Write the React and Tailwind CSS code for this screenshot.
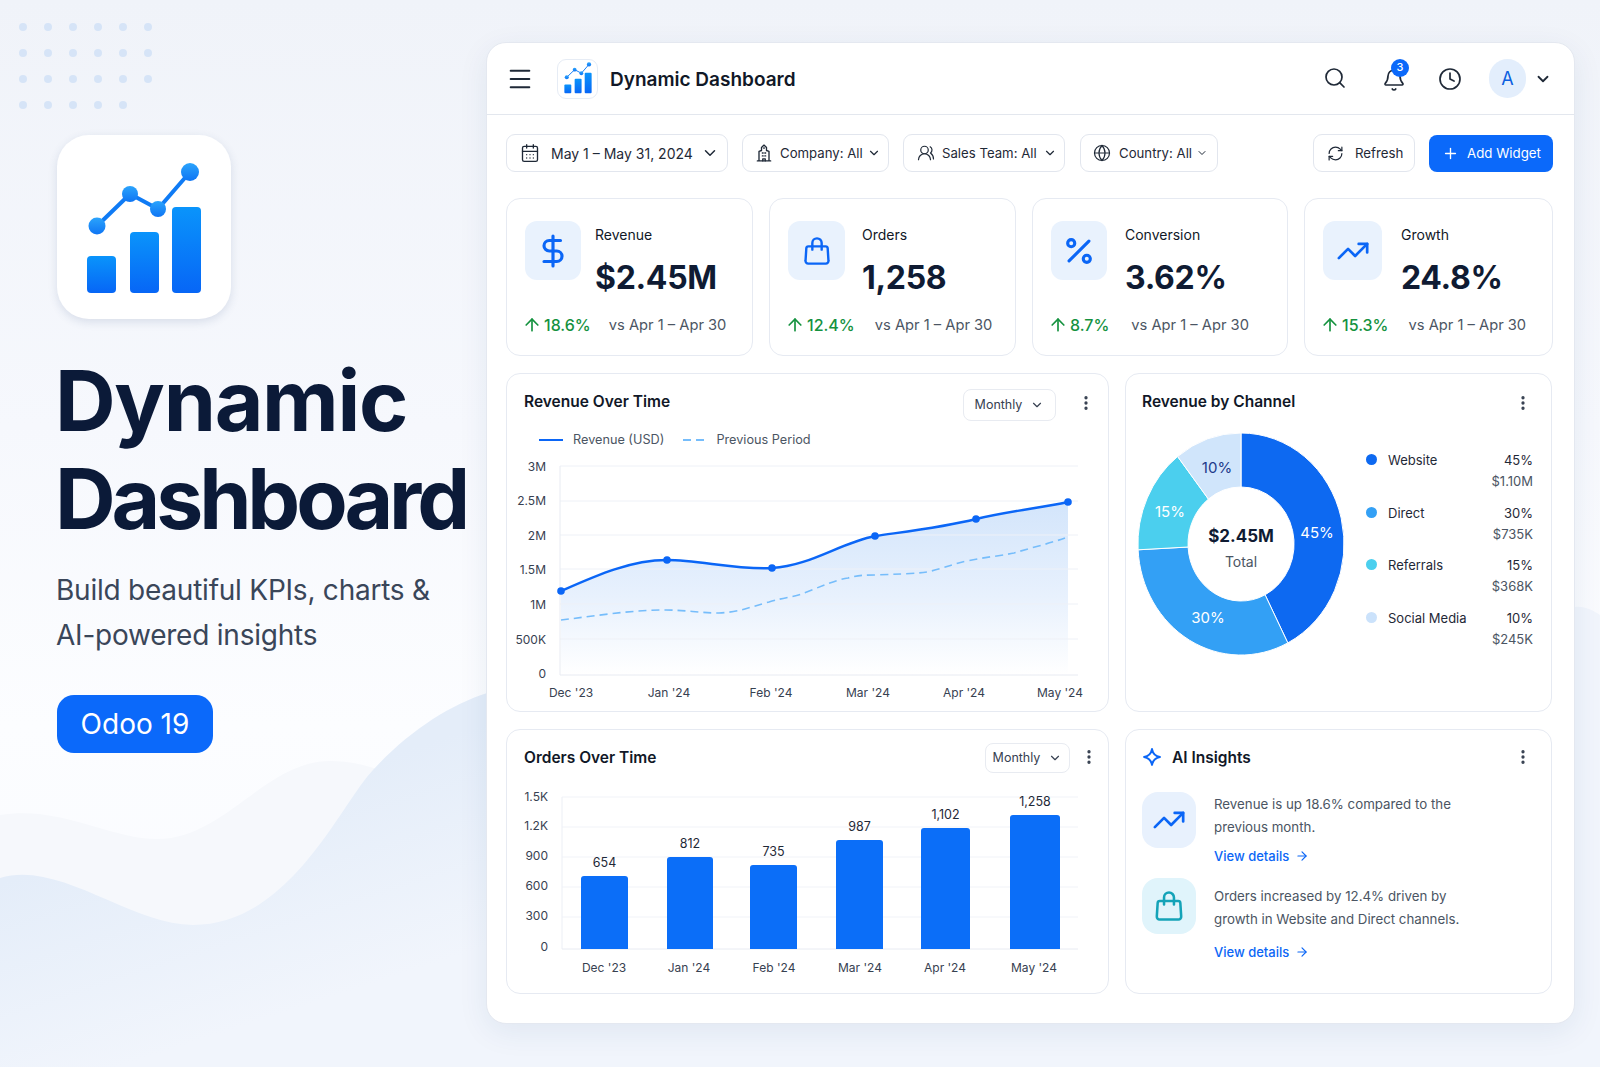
import { Menu, Search, Bell, Clock, ChevronDown, CalendarDays, UsersRound, Globe, RefreshCw, Plus, DollarSign, Percent, TrendingUp, ArrowUp, ArrowRight, EllipsisVertical } from 'lucide-react'

const BagIcon = ({ className }) => (
  <svg viewBox="0 0 24 24" fill="none" stroke="currentColor" strokeWidth="1.8" strokeLinejoin="round" strokeLinecap="round" className={className}>
    <path d="M5.5 8.5h13a1.5 1.5 0 0 1 1.5 1.4l.6 9.4a2 2 0 0 1-2 2.2H5.4a2 2 0 0 1-2-2.2l.6-9.4a1.5 1.5 0 0 1 1.5-1.4z" />
    <path d="M8.5 11V6a3.5 3.5 0 0 1 7 0v5" />
  </svg>
)

const TowerIcon = ({ className }) => (
  <svg viewBox="0 0 24 24" fill="none" stroke="currentColor" strokeWidth="1.6" strokeLinejoin="round" strokeLinecap="round" className={className}>
    <path d="M4 21.5h16M6 21.5V10l3-1V5.5l3-3 3 3V9l3 1v11.5" />
    <path d="M10 12h1M13 12h1M10 15.5h1M13 15.5h1M10.5 21.5V19h3v2.5M12 5.5v1" />
  </svg>
)

const LogoMark = ({ className, viewBox }) => (
  <svg viewBox={viewBox} className={className}>
    <defs>
      <linearGradient id="logoBar" x1="0" y1="0" x2="0" y2="1">
        <stop offset="0" stopColor="#0a94fb" />
        <stop offset="1" stopColor="#0766f6" />
      </linearGradient>
      <linearGradient id="logoDot" x1="0" y1="0" x2="0" y2="1">
        <stop offset="0" stopColor="#2ba4fc" />
        <stop offset="1" stopColor="#0f75f4" />
      </linearGradient>
    </defs>
    <rect x="87" y="256" width="29" height="37" rx="4" fill="url(#logoBar)" />
    <rect x="130" y="232" width="29" height="61" rx="4" fill="url(#logoBar)" />
    <rect x="172" y="207" width="29" height="86" rx="4" fill="url(#logoBar)" />
    <polyline points="97,226 130,194 158,209 190,172" fill="none" stroke="#0f7bf5" strokeWidth="4" />
    <circle cx="97" cy="226" r="8.5" fill="url(#logoDot)" />
    <circle cx="130" cy="194" r="8" fill="url(#logoDot)" />
    <circle cx="158" cy="209" r="8" fill="url(#logoDot)" />
    <circle cx="190" cy="172" r="9" fill="url(#logoDot)" />
  </svg>
)

const dotRows = [
  [23, 48, 73, 98, 123, 148],
  [23, 48, 73, 98, 123, 148],
  [23, 48, 73, 98, 123, 148],
  [23, 48, 73, 98, 123],
]

const Backdrop = () => (
  <svg viewBox="0 0 1600 1067" className="absolute inset-0 w-[1600px] h-[1067px]">
    <defs>
      <linearGradient id="pageBg" x1="0" y1="0" x2="0" y2="1">
        <stop offset="0" stopColor="#f0f3f9" />
        <stop offset="0.4" stopColor="#f6f8fd" />
        <stop offset="0.68" stopColor="#fcfdff" />
        <stop offset="1" stopColor="#f8faff" />
      </linearGradient>
      <linearGradient id="waveFront" gradientUnits="userSpaceOnUse" x1="0" y1="700" x2="120" y2="1067">
        <stop offset="0.45" stopColor="#e4edf9" />
        <stop offset="1" stopColor="#f1f5fc" />
      </linearGradient>
    </defs>
    <rect width="1600" height="1067" fill="url(#pageBg)" />
    <path d="M0 815C60 805 110 839 157 839C225 839 265 761 330 761C385 761 420 795 467 795C600 795 800 700 1000 700C1250 700 1450 640 1600 640V1067H0Z" fill="#f6f8fc" />
    <path d="M0 878C60 860 130 925 193 925C290 925 340 805 373 770C410 730 450 705 487 693C700 640 1400 640 1575 607C1585 606 1592 610 1600 615V1067H0Z" fill="url(#waveFront)" />
    {dotRows.map((row, i) =>
      row.map((x) => <circle key={`${i}-${x}`} cx={x} cy={[27, 53, 79, 105][i]} r="4" fill="#d6e4f7" />)
    )}
  </svg>
)

const FilterButton = ({ icon, label, box, chevron, labelTop = '' }) => (
  <button className={`flex items-center h-[38px] rounded-[9px] border border-[#e2e6ee] bg-white text-[#1f2937] ${box}`}>
    {icon}
    <span className={`whitespace-nowrap ${labelTop}`}>{label}</span>
    <ChevronDown className={`text-[#1f2937] ${chevron}`} strokeWidth={2} />
  </button>
)

const kpis = [
  { label: 'Revenue', value: '$2.45M', delta: '18.6%', tile: 'w-[56px]', gap: 'gap-[14px]', vsGap: 'ml-[18px]', icon: <DollarSign className="w-[36px] h-[36px] text-[#0b66f6]" strokeWidth={2.1} /> },
  { label: 'Orders', value: '1,258', delta: '12.4%', tile: 'w-[57px]', gap: 'gap-[17px]', vsGap: 'ml-[20px]', icon: <BagIcon className="w-[32px] h-[32px] text-[#0b66f6]" /> },
  { label: 'Conversion', value: '3.62%', delta: '8.7%', tile: 'w-[56px]', gap: 'gap-[18px]', vsGap: 'ml-[22px]', icon: <Percent className="w-[34px] h-[34px] text-[#0b66f6]" strokeWidth={2.2} /> },
  { label: 'Growth', value: '24.8%', delta: '15.3%', tile: 'w-[59px]', gap: 'gap-[19px]', vsGap: 'ml-[20px]', icon: <TrendingUp className="w-[34px] h-[34px] text-[#0b66f6]" strokeWidth={1.9} /> },
]

const KpiCard = ({ kpi }) => (
  <div className="h-[158px] rounded-[14px] border border-[#e6eaf2] bg-white pl-[18px] pt-[22px]">
    <div className={`flex ${kpi.gap}`}>
      <div className={`h-[59px] rounded-[12px] bg-[#e9f2fd] flex items-center justify-center shrink-0 ${kpi.tile}`}>{kpi.icon}</div>
      <div className="mt-[2px]">
        <div className="text-[14px] leading-[24px] text-[#111827]">{kpi.label}</div>
        <div className="mt-[10px] text-[32px] leading-[42px] font-bold text-[#0f1b33] tracking-[-0.01em] whitespace-nowrap">{kpi.value}</div>
      </div>
    </div>
    <div className="flex items-center mt-[14px] h-[24px]">
      <ArrowUp className="w-[20px] h-[20px] text-[#15923f] ml-[-3px] mr-[2px]" strokeWidth={2} />
      <span className="text-[16px] font-medium text-[#15923f]">{kpi.delta}</span>
      <span className={`text-[14.7px] text-[#4b5563] whitespace-nowrap ${kpi.vsGap}`}>vs Apr 1 – Apr 30</span>
    </div>
  </div>
)

const MonthlySelect = ({ className }) => (
  <button className={`flex items-center justify-center gap-[8px] rounded-[8px] border border-[#e8ebf1] bg-white text-[12.5px] text-[#374151] ${className}`}>
    Monthly
    <ChevronDown className="w-[14px] h-[14px]" strokeWidth={2} />
  </button>
)

const Kebab = ({ className }) => <EllipsisVertical className={`w-[18px] h-[18px] text-[#374151] ${className}`} strokeWidth={2.4} />

const revenueLine = 'M561 591C595 576 630 560 667 560C700 560 735 570 772 568C810 566 840 543 875 536C910 531 945 527 976 519C1010 511 1040 508 1068 502'
const prevLine = 'M561 620C595 616 630 610 666 610C685 610 700 613 719 613C740 612 750 607 769 602C785 597 795 597 804 593C820 587 835 580 848 578C858 575 866 575 876 575C895 574 912 574 927 572C945 568 952 564 967 561C985 557 1000 556 1014 553C1030 548 1048 544 1065 538'
const revenueDots = [[561, 591], [667, 560], [772, 568], [875, 536], [976, 519], [1068, 502]]

const RevenueChart = () => (
  <svg viewBox="507 455 601 255" className="block w-[601px] h-[255px]">
    <defs>
      <linearGradient id="revFill" x1="0" y1="0" x2="0" y2="1">
        <stop offset="0" stopColor="#d3e5fb" />
        <stop offset="0.55" stopColor="#e8f1fd" />
        <stop offset="1" stopColor="#ffffff" />
      </linearGradient>
    </defs>
    <path d={`${revenueLine}V675H561Z`} fill="url(#revFill)" />
    {[466, 501, 535, 569, 604, 639].map((y) => (
      <line key={y} x1="560" x2="1078" y1={y} y2={y} stroke="#eef1f7" />
    ))}
    <line x1="560" x2="560" y1="466" y2="675" stroke="#e8ebf2" />
    <line x1="560" x2="1078" y1="675" y2="675" stroke="#e8ebf2" />
    <path d={prevLine} fill="none" stroke="#76bdfb" strokeWidth="1.6" strokeDasharray="8 5" />
    <path d={revenueLine} fill="none" stroke="#0b66f6" strokeWidth="2.4" />
    {revenueDots.map(([x, y]) => <circle key={x} cx={x} cy={y} r="3.8" fill="#0b66f6" />)}
    {[['3M', 466], ['2.5M', 500], ['2M', 535], ['1.5M', 569], ['1M', 604], ['500K', 639], ['0', 673]].map(([t, y]) => (
      <text key={t} x="546" y={y} textAnchor="end" dominantBaseline="central" className="fill-[#374151] text-[12px]">{t}</text>
    ))}
    {[["Dec '23", 571], ["Jan '24", 669], ["Feb '24", 771], ["Mar '24", 868], ["Apr '24", 964], ["May '24", 1060]].map(([t, x]) => (
      <text key={t} x={x} y="692" textAnchor="middle" dominantBaseline="central" className="fill-[#374151] text-[12px]">{t}</text>
    ))}
  </svg>
)

const orderBars = [
  { x: 581, w: 47, top: 876, value: '654', vy: 862, lx: 604, month: "Dec '23" },
  { x: 667, w: 46, top: 857, value: '812', vy: 843, lx: 689, month: "Jan '24" },
  { x: 750, w: 47, top: 865, value: '735', vy: 851, lx: 774, month: "Feb '24" },
  { x: 836, w: 47, top: 840, value: '987', vy: 826, lx: 860, month: "Mar '24" },
  { x: 921, w: 49, top: 828, value: '1,102', vy: 814, lx: 945, month: "Apr '24" },
  { x: 1010, w: 50, top: 815, value: '1,258', vy: 801, lx: 1034, month: "May '24" },
]

const OrdersChart = () => (
  <svg viewBox="507 780 601 213" className="block w-[601px] h-[213px]">
    {[797, 827, 857, 887, 917].map((y) => (
      <line key={y} x1="562" x2="1078" y1={y} y2={y} stroke="#f1f3f8" />
    ))}
    <line x1="562" x2="562" y1="797" y2="949" stroke="#eceff5" />
    <line x1="562" x2="1078" y1="949" y2="949" stroke="#e8ebf2" />
    {[['1.5K', 796], ['1.2K', 825], ['900', 855], ['600', 885], ['300', 915], ['0', 946]].map(([t, y]) => (
      <text key={t} x="548" y={y} textAnchor="end" dominantBaseline="central" className="fill-[#374151] text-[12px]">{t}</text>
    ))}
    {orderBars.map((b) => (
      <g key={b.month}>
        <path d={`M${b.x} 949V${b.top + 3}a3 3 0 0 1 3 -3H${b.x + b.w - 3}a3 3 0 0 1 3 3V949Z`} fill="#0b6ef8" />
        <text x={b.x + b.w / 2} y={b.vy} textAnchor="middle" dominantBaseline="central" className="fill-[#1f2937] text-[12.5px]">{b.value}</text>
        <text x={b.lx} y="967" textAnchor="middle" dominantBaseline="central" className="fill-[#374151] text-[12px]">{b.month}</text>
      </g>
    ))}
  </svg>
)

// angles are clockwise from 12 o'clock, the ring is a bit taller than wide in the picture
const ringPoint = (deg, rx, ry) => {
  const t = (deg * Math.PI) / 180
  return `${(1241 + rx * Math.sin(t)).toFixed(1)} ${(545 - ry * Math.cos(t)).toFixed(1)}`
}

const seg = (from, to) =>
  `M${ringPoint(from, 103, 111)}A103 111 0 0 1 ${ringPoint(to, 103, 111)}L${ringPoint(to, 53, 57)}A53 57 0 0 0 ${ringPoint(from, 53, 57)}Z`

const donutSegments = [
  { d: seg(0, 153), fill: '#0d69f1' },
  { d: seg(153, 267), fill: '#33a0f5' },
  { d: seg(267, 322), fill: '#4bcfee' },
  { d: seg(322, 360), fill: '#d0e5fb' },
]

const Donut = () => (
  <svg viewBox="1130 425 225 240" className="block w-[225px] h-[240px] shrink-0">
    {donutSegments.map((s) => <path key={s.fill} d={s.d} fill={s.fill} stroke="#ffffff" strokeWidth="1" />)}
    {[['45%', 1317, 533, 'fill-white'], ['30%', 1208, 618, 'fill-white'], ['15%', 1170, 512, 'fill-white'], ['10%', 1217, 468, 'fill-[#1e3a8a]']].map(([t, x, y, c]) => (
      <text key={t} x={x} y={y} textAnchor="middle" dominantBaseline="central" className={`text-[15px] ${c}`}>{t}</text>
    ))}
    <text x="1241" y="537" textAnchor="middle" dominantBaseline="central" className="fill-[#0f1b33] text-[17px] font-bold">$2.45M</text>
    <text x="1241" y="562" textAnchor="middle" dominantBaseline="central" className="fill-[#4b5563] text-[14px]">Total</text>
  </svg>
)

const channels = [
  { name: 'Website', pct: '45%', amount: '$1.10M', dot: 'bg-[#0d69f1]' },
  { name: 'Direct', pct: '30%', amount: '$735K', dot: 'bg-[#33a0f5]' },
  { name: 'Referrals', pct: '15%', amount: '$368K', dot: 'bg-[#4bcfee]' },
  { name: 'Social Media', pct: '10%', amount: '$245K', dot: 'bg-[#cbe2fb]' },
]

const Insight = ({ tile, icon, lines, top, textTop, linkTop }) => (
  <div className={`flex gap-[18px] ${top}`}>
    <div className={`w-[54px] h-[56px] rounded-[16px] flex items-center justify-center shrink-0 ${tile}`}>{icon}</div>
    <div className={textTop}>
      <p className="text-[13.3px] leading-[23px] text-[#4b5563] whitespace-nowrap">{lines[0]}<br />{lines[1]}</p>
      <a className={`flex items-center gap-[6px] text-[13px] leading-[20px] font-medium text-[#0b66f6] ${linkTop}`}>
        View details
        <ArrowRight className="w-[14px] h-[14px]" strokeWidth={2} />
      </a>
    </div>
  </div>
)

export default function App() {
  return (
    <div className="relative flex w-[1600px] h-[1067px] overflow-hidden font-['Inter',sans-serif]">
      <Backdrop />

      <aside className="relative w-[486px] shrink-0 pl-[57px] pt-[135px]">
        <div className="w-[174px] h-[184px] rounded-[32px] bg-white shadow-[0_3px_10px_rgba(40,70,120,0.14)]">
          <LogoMark viewBox="57 135 174 184" className="w-[174px] h-[184px]" />
        </div>
        <h1 className="mt-[33px] ml-[-2px] text-[84px] leading-[98px] font-bold text-[#0b1a38] whitespace-nowrap">
          <span className="block tracking-[-1.3px]">Dynamic</span>
          <span className="block tracking-[-4.1px]">Dashboard</span>
        </h1>
        <p className="mt-[20px] ml-[-1px] text-[28px] leading-[45px] text-[#3a4659] tracking-[-0.23px] whitespace-nowrap">Build beautiful KPIs, charts &amp;<br />AI-powered insights</p>
        <div className="mt-[37px] w-[156px] h-[58px] rounded-[17px] bg-[#0b69fa] text-white text-[28px] flex items-center justify-center">Odoo 19</div>
      </aside>

      <main className="relative mt-[42px] w-[1089px] h-[982px] rounded-[20px] bg-white border border-[#e4e8f0] shadow-[0_8px_30px_rgba(30,60,120,0.08)]">
        <header className="flex items-center h-[72px] border-b border-[#e3e7ee] pl-[19px] pr-[22px]">
          <Menu className="w-[28px] h-[28px] text-[#1f2937] shrink-0" strokeWidth={1.7} />
          <div className="ml-[23px] w-[41px] h-[40px] rounded-[9px] border border-[#e6ecf5] bg-white flex items-center justify-center shrink-0">
            <LogoMark viewBox="80 162 128 138" className="w-[32px] h-[33px]" />
          </div>
          <div className="ml-[12px] mt-[3px] text-[19px] font-semibold text-[#111827]">Dynamic Dashboard</div>
          <div className="ml-auto flex items-center">
            <Search className="w-[24px] h-[24px] mb-[2px] text-[#1f2937]" strokeWidth={1.7} />
            <div className="relative ml-[35px] mt-[2px]">
              <Bell className="w-[24px] h-[24px] text-[#1f2937]" strokeWidth={1.7} />
              <span className="absolute top-[-9px] left-[9px] w-[18px] h-[18px] rounded-full bg-[#0b69fa] text-white text-[11px] font-medium flex items-center justify-center">3</span>
            </div>
            <Clock className="ml-[32px] w-[24px] h-[24px] text-[#1f2937]" strokeWidth={1.7} />
            <div className="ml-[27px] w-[37px] h-[39px] rounded-full bg-[#e3eefc] text-[#0b5ee0] text-[18px] flex items-center justify-center">A</div>
            <ChevronDown className="ml-[8px] w-[18px] h-[18px] text-[#1f2937]" strokeWidth={2.4} />
          </div>
        </header>

        <div className="pl-[19px] pr-[21px]">
          <div className="flex items-center mt-[19px]">
            <FilterButton box="w-[222px] gap-[11px] pl-[13px] text-[14px]" chevron="ml-[-3px] w-[18px] h-[18px]" label="May 1 – May 31, 2024" icon={<CalendarDays className="w-[20px] h-[20px] text-[#1f2937]" strokeWidth={1.6} />} />
            <div className="ml-[14px]"><FilterButton labelTop="mt-[2px]" box="w-[147px] gap-[6px] pl-[11px] text-[13.2px]" chevron="ml-[-2px] w-[14px] h-[14px]" label="Company: All" icon={<TowerIcon className="w-[20px] h-[20px] text-[#1f2937]" />} /></div>
            <div className="ml-[14px]"><FilterButton labelTop="mt-[2px]" box="w-[162px] gap-[7px] pl-[13px] text-[13.2px]" chevron="ml-[-1px] w-[14px] h-[14px]" label="Sales Team: All" icon={<UsersRound className="w-[18px] h-[18px] text-[#1f2937]" strokeWidth={1.6} />} /></div>
            <div className="ml-[15px]"><FilterButton labelTop="mt-[2px]" box="w-[138px] gap-[8px] pl-[12px] text-[13.2px]" chevron="ml-[-4px] w-[12px] h-[12px]" label="Country: All" icon={<Globe className="w-[18px] h-[18px] text-[#1f2937]" strokeWidth={1.6} />} /></div>
            <button className="ml-auto flex items-center gap-[11px] w-[102px] h-[38px] rounded-[9px] border border-[#e2e6ee] bg-white pl-[13px] text-[13.3px] text-[#1f2937]">
              <RefreshCw className="w-[17px] h-[17px]" strokeWidth={1.7} />
              <span className="mt-[2px]">Refresh</span>
            </button>
            <button className="ml-[14px] flex items-center gap-[8px] w-[124px] h-[37px] rounded-[8px] bg-[#0b69fa] pl-[13px] text-[13.3px] text-white">
              <Plus className="w-[17px] h-[17px]" strokeWidth={1.9} />
              <span className="mt-[2px]">Add Widget</span>
            </button>
          </div>

          <div className="grid grid-cols-[247px_247px_256px_249px] gap-x-4 mt-[26px]">
            {kpis.map((k) => <KpiCard key={k.label} kpi={k} />)}
          </div>

          <div className="grid grid-cols-[603px_427px] grid-rows-[339px_265px] gap-x-4 gap-y-[17px] mt-[17px]">
            <section className="rounded-[14px] border border-[#e6eaf2] bg-white">
              <div className="flex items-start pt-[15px] pl-[17px] pr-[13px]">
                <h2 className="mt-[1px] text-[15.5px] leading-[24px] font-semibold text-[#111827] whitespace-nowrap">Revenue Over Time</h2>
                <MonthlySelect className="ml-auto w-[93px] h-[32px]" />
                <Kebab className="ml-[21px] mt-[5px]" />
              </div>
              <div className="flex items-center h-[20px] mt-[9px] pl-[32px] text-[12.7px] text-[#4b5563]">
                <span className="w-[24px] h-[2px] bg-[#0b66f6]" />
                <span className="ml-[10px]">Revenue (USD)</span>
                <svg width="22" height="2" className="ml-[19px]"><line x1="0" x2="22" y1="1" y2="1" stroke="#76bdfb" strokeWidth="2" strokeDasharray="8 5" /></svg>
                <span className="ml-[11px]">Previous Period</span>
              </div>
              <div className="mt-[5px]"><RevenueChart /></div>
            </section>

            <section className="rounded-[14px] border border-[#e6eaf2] bg-white">
              <div className="flex items-start pt-[15px] pl-[16px] pr-[19px]">
                <h2 className="mt-[1px] text-[15.5px] leading-[24px] font-semibold text-[#111827] whitespace-nowrap">Revenue by Channel</h2>
                <Kebab className="ml-auto mt-[5px]" />
              </div>
              <div className="flex mt-[10px] pl-[4px]">
                <Donut />
                <ul className="w-[167px] ml-[11px] mt-[12px]">
                  {channels.map((c) => (
                    <li key={c.name} className="h-[52.5px] flex items-start text-[13px] pt-[14px]">
                      <span className={`w-[11px] h-[11px] mt-[4px] rounded-full shrink-0 ${c.dot}`} />
                      <span className="ml-[11px] leading-[20px] text-[#1f2937] whitespace-nowrap">{c.name}</span>
                      <span className="ml-auto text-right leading-[21px]">
                        <span className="block text-[#1f2937]">{c.pct}</span>
                        <span className="block text-[#4b5563]">{c.amount}</span>
                      </span>
                    </li>
                  ))}
                </ul>
              </div>
            </section>

            <section className="rounded-[14px] border border-[#e6eaf2] bg-white">
              <div className="flex items-start pt-[13px] pl-[17px] pr-[10px]">
                <h2 className="mt-[3px] text-[15.5px] leading-[24px] font-semibold text-[#111827] whitespace-nowrap">Orders Over Time</h2>
                <MonthlySelect className="ml-auto w-[85px] h-[30px]" />
                <Kebab className="ml-[10px] mt-[5px]" />
              </div>
              <div className="mt-[7px]"><OrdersChart /></div>
            </section>

            <section className="rounded-[14px] border border-[#e6eaf2] bg-white">
              <div className="flex items-start pt-[15px] pl-[16px] pr-[19px]">
                <svg viewBox="0 0 24 24" fill="none" stroke="#0b66f6" strokeWidth="2.4" strokeLinejoin="round" className="w-[20px] h-[22px] mt-[1px]">
                  <path d="M12 2.5C13 8 16 11 21.5 12C16 13 13 16 12 21.5C11 16 8 13 2.5 12C8 11 11 8 12 2.5Z" />
                </svg>
                <h2 className="ml-[10px] mt-[1px] text-[15.5px] leading-[24px] font-semibold text-[#111827] whitespace-nowrap">AI Insights</h2>
                <Kebab className="ml-auto mt-[3px]" />
              </div>
              <div className="pl-[16px]">
                <Insight
                  top="mt-[22px]"
                  textTop="mt-[1px]"
                  linkTop="mt-[7px]"
                  tile="bg-[#e8f1fd]"
                  icon={<TrendingUp className="w-[34px] h-[34px] text-[#0b66f6]" strokeWidth={1.9} />}
                  lines={['Revenue is up 18.6% compared to the', 'previous month.']}
                />
                <Insight
                  top="mt-[12px]"
                  textTop="mt-[7px]"
                  linkTop="mt-[11px]"
                  tile="bg-[#e0f4fb]"
                  icon={<BagIcon className="w-[34px] h-[34px] text-[#14a3b8]" />}
                  lines={['Orders increased by 12.4% driven by', 'growth in Website and Direct channels.']}
                />
              </div>
            </section>
          </div>
        </div>
      </main>
    </div>
  )
}
